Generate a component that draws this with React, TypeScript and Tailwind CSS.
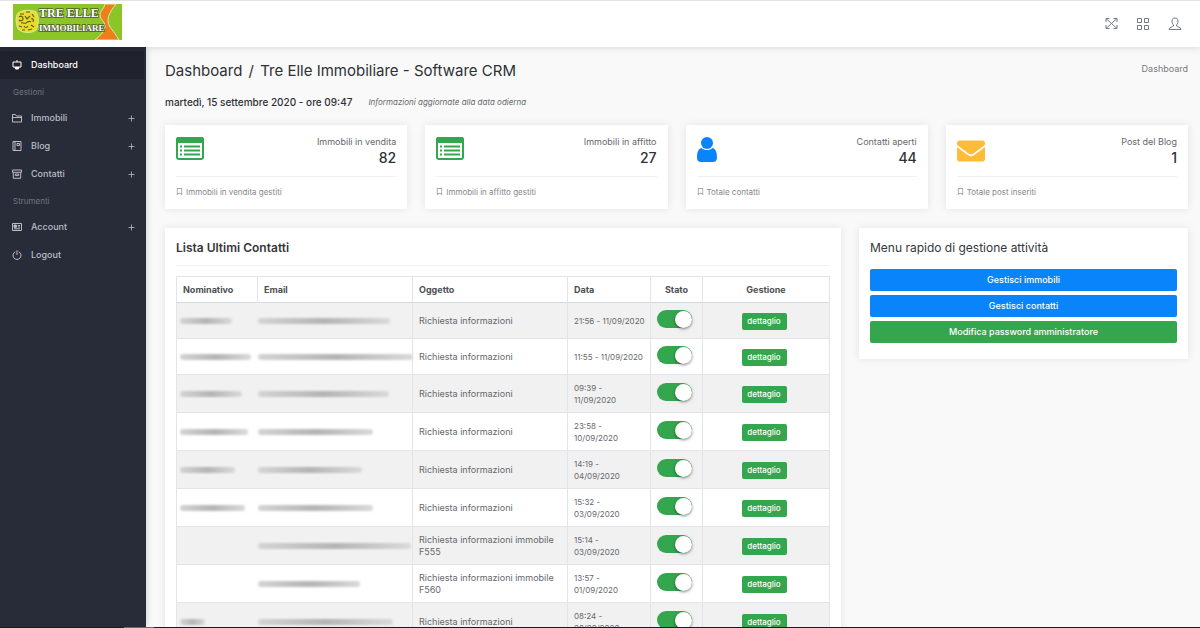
import React from 'react';
import { FaEnvelope, FaRegBookmark } from 'react-icons/fa';

type IconName = 'desktop' | 'folder' | 'book' | 'archive' | 'card' | 'power';

interface MenuEntry {
  label: string;
  icon: IconName;
  expandable?: boolean;
}

interface Contact {
  nameClass: string;
  emailClass: string;
  subject: string;
  date: string;
}

const gestioni: MenuEntry[] = [
  { label: 'Immobili', icon: 'folder', expandable: true },
  { label: 'Blog', icon: 'book', expandable: true },
  { label: 'Contatti', icon: 'archive', expandable: true }
];

const strumenti: MenuEntry[] = [
  { label: 'Account', icon: 'card', expandable: true },
  { label: 'Logout', icon: 'power' }
];

// names and addresses are masked, only the length of the mask changes
const contacts: Contact[] = [
  { nameClass: 'w-[52px]', emailClass: 'w-[132px]', subject: 'Richiesta informazioni', date: '21:56 - 11/09/2020' },
  { nameClass: 'w-[71px]', emailClass: 'w-[155px]', subject: 'Richiesta informazioni', date: '11:55 - 11/09/2020' },
  { nameClass: 'w-[62px]', emailClass: 'w-[131px]', subject: 'Richiesta informazioni', date: '09:39 -\n11/09/2020' },
  { nameClass: 'w-[68px]', emailClass: 'w-[115px]', subject: 'Richiesta informazioni', date: '23:58 -\n10/09/2020' },
  { nameClass: 'w-[55px]', emailClass: 'w-[104px]', subject: 'Richiesta informazioni', date: '14:19 -\n04/09/2020' },
  { nameClass: 'w-[65px]', emailClass: 'w-[115px]', subject: 'Richiesta informazioni', date: '15:32 -\n03/09/2020' },
  { nameClass: '', emailClass: 'w-[153px]', subject: 'Richiesta informazioni immobile F555', date: '15:14 -\n03/09/2020' },
  { nameClass: '', emailClass: 'w-[102px]', subject: 'Richiesta informazioni immobile F560', date: '13:57 -\n01/09/2020' },
  { nameClass: 'w-[25px]', emailClass: 'w-[135px]', subject: 'Richiesta informazioni', date: '08:24 -\n28/08/2020' }
];

const MenuIcon: React.FC<{ name: IconName }> = ({ name }) => {
  const shapes: Record<IconName, React.ReactNode> = {
    desktop: (
      <>
        <path d="M1 2h8v5H1zM5 0v2" />
        <path d="M3 7.500h4l-.6 1.500H3.600z" fill="currentColor" />
      </>
    ),
    folder: <path d="M.5 9V1.500h3l1 1.500h5v6zM.5 4.500h9" />,
    book: <path d="M1 .5h8v9H1zM3 .5v9M5 2.500h2.500v2H5z" />,
    archive: <path d="M.5 1h9v2.300h-9zM1.300 3.300v6h7.400v-6M3.300 5h3.400v1.600H3.300z" />,
    card: (
      <>
        <path d="M.5 1.500h9v7h-9zM5.800 3.500H8M5.800 5H8M2 6.800h6" />
        <path d="M2 3h2.400v2.300H2z" fill="currentColor" />
      </>
    ),
    power: <path d="M3.300 1.800a4 4 0 1 0 3.400 0M5 .3V5" />
  };
  return (
    <svg viewBox="0 0 10 10" className="size-[10px] shrink-0" fill="none" stroke="currentColor" strokeWidth="1">
      {shapes[name]}
    </svg>
  );
};

const Logo: React.FC = () => (
  <svg viewBox="0 0 109 36" className="h-[36px] w-[109px]" role="img" aria-label="Tre Elle Immobiliare">
    <rect width="109" height="36" fill="#8bc528" />
    <path
      d="M92 0C91 5 87 7 87 11c0 5 5 6 5 11s-4 9-10 14h24c-3-5-6-9-9-13-4-7-2-13 6-23z"
      fill="#ee7d1a"
      stroke="#dfe8a8"
      strokeWidth="1"
    />
    <path d="M5 9c4-3 13-4 18-1 3 4 3 13 0 18-5 4-14 3-18-1C3 20 2 13 5 9z" fill="#e9dc2c" stroke="#dfe9a0" />
    <path
      d="M7 10h4M13 8h4M19 10l2 3M6 13c3-2 4 0 4 2s-3 2-4 1M12 12l2 3 3-3M18 15c2-1 3 1 2 3M8 19c2-1 3 1 5 0s3-3 5-1M6 22l3 1M11 22c1 2 3 2 4 0M18 21l3 2M9 26h3M15 26l4-1"
      fill="none"
      stroke="#5f5d16"
      strokeWidth="1.200"
    />
    <g
      fontFamily="Liberation Serif, serif"
      fontWeight="bold"
      fill="#fff"
      stroke="#4d5a2c"
      strokeWidth="1.500"
      paintOrder="stroke"
    >
      <text x="26" y="13" fontSize="12">TRE ELLE</text>
      <text x="26" y="27" fontSize="9">IMMOBILIARE</text>
    </g>
  </svg>
);

const ListIcon: React.FC = () => (
  <svg viewBox="0 0 28 23" className="h-[23px] w-[28px] text-[#34a74e]">
    <rect x="1" y="1" width="26" height="21" rx="2" fill="#fff" stroke="currentColor" strokeWidth="2" />
    <path d="M0 6V2.500A2.500 2.500 0 0 1 2.500 0h23A2.500 2.500 0 0 1 28 2.500V6z" fill="currentColor" />
    <path d="M4 9.500h2M4 13.500h2M4 17.500h2M8 9.500h16M8 13.500h16M8 17.500h16" stroke="currentColor" strokeWidth="1.800" />
  </svg>
);

const PersonIcon: React.FC = () => (
  <svg viewBox="0 0 20 25" className="h-[25px] w-[20px]" fill="#0a84fb">
    <circle cx="10" cy="6" r="6" />
    <path d="M4.500 11C1.500 11.500 0 15 0 20.500 0 23.500 1.500 25 4 25h12c2.500 0 4-1.500 4-4.500C20 15 18.500 11.500 15.500 11c-3 2.700-8 2.700-11 0z" />
  </svg>
);

const stats = [
  { label: 'Immobili in vendita', value: 82, note: 'Immobili in vendita gestiti', icon: <ListIcon /> },
  { label: 'Immobili in affitto', value: 27, note: 'Immobili in affitto gestiti', icon: <ListIcon /> },
  { label: 'Contatti aperti', value: 44, note: 'Totale contatti', icon: <PersonIcon /> },
  { label: 'Post del Blog', value: 1, note: 'Totale post inseriti', icon: <FaEnvelope className="size-[28px] text-[#febc38]" /> }
];

const MenuLink: React.FC<{ entry: MenuEntry; active?: boolean }> = ({ entry, active }) => (
  <a
    href="#"
    className={`mr-0.5 flex h-7 items-center pr-2 pl-3 text-[9px] font-medium ${
      active ? 'bg-[#20222d] text-white' : 'text-[#b9bcc6]'
    }`}
  >
    <MenuIcon name={entry.icon} />
    <span className="ml-[9px] flex-1">{entry.label}</span>
    {entry.expandable && (
      <svg viewBox="0 0 7 7" className="mr-px size-[7px]" stroke="currentColor" strokeWidth="0.800">
        <path d="M3.500 .5v6M.5 3.500h6" />
      </svg>
    )}
  </a>
);

const Mask: React.FC<{ widthClass: string }> = ({ widthClass }) => (
  <div className={`h-[6px] rounded-full bg-linear-to-r from-[#d4d4d4] via-[#b4b4b4] to-[#dadada] blur-[1px] ${widthClass}`} />
);

export default function App() {
  return (
    <div className="flex h-screen flex-col overflow-hidden bg-[#f9f9f9] font-['Inter',sans-serif] text-[#66696d]">
      <header className="z-10 flex h-[47px] shrink-0 items-center justify-between border-t border-[#e2e2ea] bg-white pr-[18px] pl-[13px] shadow-[0_1px_8px_rgba(0,0,0,0.12)]">
        <a href="#" className="-mt-1">
          <Logo />
        </a>
        <div className="flex items-center gap-[18px] text-[#747b80]">
          <button type="button" aria-label="Schermo intero">
            <svg viewBox="0 0 14 14" className="size-[14px]" fill="none" stroke="currentColor">
              <path d="M2 1.500l11 10M13 1.500l-11 10M2 5V1.500h3.500M9.500 1.500H13V5M13 8v3.500H9.500M5.500 11.500H2V8" />
            </svg>
          </button>
          <button type="button" aria-label="Applicazioni">
            <svg viewBox="0 0 14 14" className="size-[14px]" fill="none" stroke="currentColor">
              <path d="M1.500 1.500h4v4h-4zM8.500 1.500h4v4h-4zM1.500 8.500h4v4h-4zM8.500 8.500h4v4h-4z" />
            </svg>
          </button>
          <button type="button" aria-label="Profilo">
            <svg viewBox="0 0 14 14" className="size-[14px]" fill="none" stroke="currentColor">
              <path d="M5.500 9V8C4.500 7 4 5.500 4 4c0-2 1.200-3 3-3s3 1 3 3c0 1.500-.5 3-1.500 4v1c.5 1 4.500 1 4.500 3.500H1C1 10 5 10 5.500 9z" />
            </svg>
          </button>
        </div>
      </header>

      <div className="flex min-h-0 flex-1">
        <nav className="w-[146px] shrink-0 bg-[#282c39] pt-1 shadow-[1px_0_6px_rgba(0,0,0,0.15)]">
          <MenuLink entry={{ label: 'Dashboard', icon: 'desktop' }} active />
          <p className="flex h-[25px] items-center pl-[13px] text-[8px] text-[#71757f]">Gestioni</p>
          {gestioni.map(entry => (
            <MenuLink key={entry.label} entry={entry} />
          ))}
          <p className="flex h-[25px] items-center pl-[13px] text-[8px] text-[#71757f]">Strumenti</p>
          {strumenti.map(entry => (
            <MenuLink key={entry.label} entry={entry} />
          ))}
        </nav>

        <main className="min-w-0 flex-1 overflow-hidden pt-3 pr-3 pl-[19px]">
          <div className="flex items-center justify-between">
            <h1 className="text-[15px] leading-6 text-[#2e3135]">
              Dashboard <span className="mx-0.5">/</span> Tre Elle Immobiliare - Software CRM
            </h1>
            <a href="#" className="pb-1 text-[9px] text-[#777b80]">Dashboard</a>
          </div>

          <div className="mt-[11px] flex items-center gap-4 leading-4">
            <p className="text-[10px] font-medium text-[#2e3135]">martedì, 15 settembre 2020 - ore 09:47</p>
            <p className="text-[8px] italic">Informazioni aggiornate alla data odierna</p>
          </div>

          {/* Counters */}
          <div className="mt-[15px] grid grid-cols-4 gap-[18px]">
            {stats.map(stat => (
              <section key={stat.label} className="bg-white px-[11px] shadow-[0_0_8px_rgba(0,0,0,0.09)]">
                <div className="flex h-[52px] justify-between border-b border-[#f0f0f0] pt-[11px]">
                  <div className="pt-px">{stat.icon}</div>
                  <div className="text-right">
                    <div className="text-[9px] leading-3">{stat.label}</div>
                    <div className="text-[14px] leading-5 font-medium text-[#2e3135]">{stat.value}</div>
                  </div>
                </div>
                <div className="flex h-8 items-center gap-[3px] pb-[3px] text-[8px] text-[#84888d]">
                  <FaRegBookmark className="size-[7px]" />
                  {stat.note}
                </div>
              </section>
            ))}
          </div>

          <div className="mt-[19px] grid grid-cols-12 items-start gap-[18px]">
            {/* Latest contacts */}
            <section className="col-span-8 bg-white px-[11px] pb-4 shadow-[0_0_8px_rgba(0,0,0,0.09)]">
              <h2 className="border-b border-[#f0f0f0] pt-3 pb-[9px] text-[12px] leading-4 font-semibold text-[#34373b]">
                Lista Ultimi Contatti
              </h2>
              <table className="mt-[10px] w-full table-fixed border-collapse border border-[#e1e5e9] text-[9px] leading-3">
                <colgroup>
                  <col className="w-[81px]" />
                  <col />
                  <col />
                  <col className="w-[83px]" />
                  <col className="w-[52px]" />
                  <col className="w-[127px]" />
                </colgroup>
                <thead>
                  <tr className="h-[26px] border-b border-[#d5dade] text-left text-[#4d5054] [&>th]:border-r [&>th]:border-r-[#e1e5e9] [&>th]:px-[6px]">
                    <th>Nominativo</th>
                    <th>Email</th>
                    <th>Oggetto</th>
                    <th>Data</th>
                    <th className="text-center">Stato</th>
                    <th className="text-center">Gestione</th>
                  </tr>
                </thead>
                <tbody>
                  {contacts.map((contact, index) => (
                    <tr key={index} className="border-b border-[#e1e5e9] odd:bg-[#f1f1f1] [&>td]:pt-[7px] [&>td]:pb-[6px]">
                      <td className="pl-[3px]">
                        {contact.nameClass && <Mask widthClass={contact.nameClass} />}
                      </td>
                      <td className="border-r border-[#e1e5e9]">
                        <Mask widthClass={contact.emailClass} />
                      </td>
                      <td className="border-r border-[#e1e5e9] px-[6px]">{contact.subject}</td>
                      <td className="border-r border-[#e1e5e9] pl-[6px] text-[8px] whitespace-pre">{contact.date}</td>
                      <td className="border-r border-[#e1e5e9] px-[6px]">
                        <input
                          type="checkbox"
                          defaultChecked
                          aria-label={`Stato contatto ${index + 1}`}
                          className="mb-1 flex h-[18px] w-[35px] appearance-none items-center rounded-full bg-[#c5c8cb] before:size-[17px] before:rounded-full before:bg-white before:shadow-[0_1px_3px_rgba(0,0,0,0.5)] checked:justify-end checked:bg-[#34a74e]"
                        />
                      </td>
                      <td className="pr-1 text-center">
                        <button type="button" className="h-[17px] w-[45px] rounded-[2px] bg-[#34a74e] text-[8px] font-medium text-white">
                          dettaglio
                        </button>
                      </td>
                    </tr>
                  ))}
                </tbody>
              </table>
            </section>

            {/* Quick menu */}
            <section className="col-span-4 bg-white px-[11px] pt-3 pb-4 shadow-[0_0_8px_rgba(0,0,0,0.09)]">
              <h2 className="text-[12px] leading-4 text-[#34373b]">Menu rapido di gestione attività</h2>
              <div className="mt-[13px] flex flex-col gap-1 text-[9px] font-medium text-white">
                <button type="button" className="h-[22px] rounded-[2px] bg-[#0a84fb]">Gestisci immobili</button>
                <button type="button" className="h-[22px] rounded-[2px] bg-[#0a84fb]">Gestisci contatti</button>
                <button type="button" className="h-[22px] rounded-[2px] bg-[#34a74e]">Modifica password amministratore</button>
              </div>
            </section>
          </div>
        </main>
      </div>

      <footer className="flex h-px shrink-0 bg-[#1b1b1d] pl-[124px]">
        <div className="w-[30px] bg-[#6a6a6c]" />
      </footer>
    </div>
  );
}
